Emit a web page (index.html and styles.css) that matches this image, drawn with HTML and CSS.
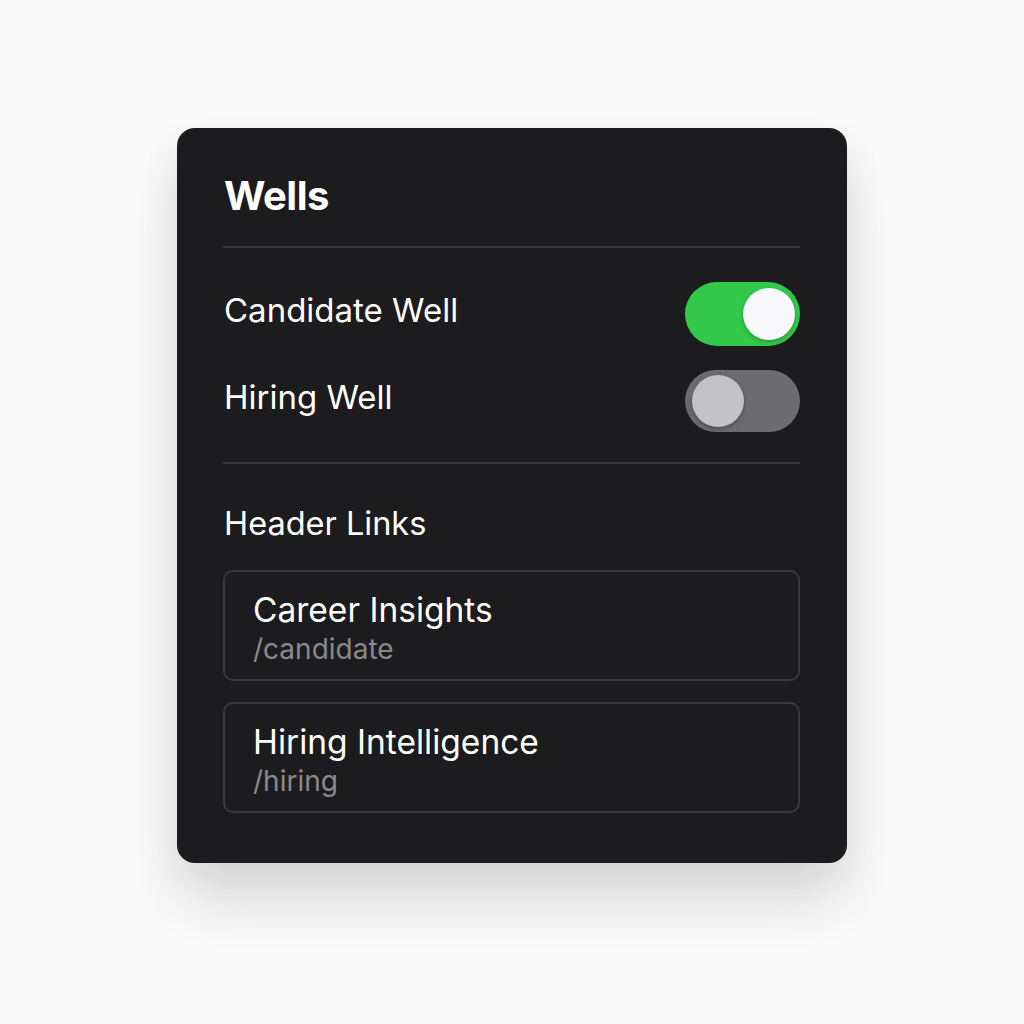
FILE: index.html
```html
<!DOCTYPE html>
<html>
<head>
<meta charset="utf-8">
<link rel="stylesheet" href="styles.css">
</head>
<body>
<div class="card">
  <h1 class="title">Wells</h1>
  <div class="divider"></div>
  <div class="toggles">
    <div class="row">
      <span class="label">Candidate Well</span>
      <span class="switch on"><span class="knob"></span></span>
    </div>
    <div class="row">
      <span class="label">Hiring Well</span>
      <span class="switch off"><span class="knob"></span></span>
    </div>
  </div>
  <div class="divider second"></div>
  <div class="section-label">Header Links</div>
  <div class="links">
    <div class="link">
      <div class="link-title">Career Insights</div>
      <div class="link-path">/candidate</div>
    </div>
    <div class="link">
      <div class="link-title">Hiring Intelligence</div>
      <div class="link-path">/hiring</div>
    </div>
  </div>
</div>
</body>
</html>
```
FILE: styles.css
```css
html, body {
  margin: 0;
  padding: 0;
  background: #fafafa;
}
body {
  font-family: Inter, "Noto Sans", sans-serif;
  padding-top: 128px;
  padding-left: 177px;
  height: 1024px;
  box-sizing: border-box;
}
.card {
  width: 670px;
  height: 735px;
  box-sizing: border-box;
  background: #1c1c1e;
  border-radius: 18px;
  padding: 46px 47px 0 46px;
  box-shadow: 0 40px 60px rgba(0,0,0,0.12), 0 10px 40px rgba(0,0,0,0.06);
  display: flex;
  flex-direction: column;
}
.title {
  margin: 0;
  font-size: 40px;
  line-height: 44px;
  font-weight: 700;
  color: #ffffff;
  letter-spacing: -0.5px;
  padding-left: 1px;
}
.divider {
  height: 2px;
  background: #3a3a3c;
  margin-top: 28px;
}
.divider.second {
  margin-top: 30px;
}
.toggles {
  display: flex;
  flex-direction: column;
  gap: 24px;
  padding-top: 34px;
}
.row {
  display: flex;
  align-items: center;
  justify-content: space-between;
  height: 64px;
}
.toggles .row:nth-child(2) { height: 62px; }
.label, .section-label {
  font-size: 33px;
  color: #ffffff;
  padding-left: 1px;
}
.section-label {
  font-size: 32.5px;
}
.label {
  padding-bottom: 8px;
}
.switch {
  width: 115px;
  height: 62px;
  border-radius: 31px;
  position: relative;
  box-sizing: border-box;
}
.switch.on {
  background: #32c94a;
  height: 64px;
  border-radius: 32px;
}
.switch.off {
  background: #6c6c70;
}
.knob {
  position: absolute;
  width: 52px;
  height: 52px;
  border-radius: 50%;
  top: 6px;
}
.switch.on .knob {
  right: 5px;
  background: #f8f8fa;
  box-shadow: 0 2px 4px rgba(0,0,0,0.25);
}
.switch.off .knob {
  left: 7px;
  top: 5px;
  background: #c2c2c6;
  box-shadow: 0 2px 4px rgba(0,0,0,0.3);
}
.section-label {
  margin-top: 40px;
  line-height: 40px;
}
.links {
  display: flex;
  flex-direction: column;
  gap: 21px;
  margin-top: 26px;
}
.link {
  border: 2px solid #3a3a3c;
  border-radius: 10px;
  height: 111px;
  box-sizing: border-box;
  padding: 18px 28px 0 28px;
}
.link-title {
  font-size: 33.5px;
  line-height: 40px;
  color: #ffffff;
}
.link-path {
  font-size: 28px;
  line-height: 34px;
  margin-top: 2px;
  color: #8a8a8e;
}
```
